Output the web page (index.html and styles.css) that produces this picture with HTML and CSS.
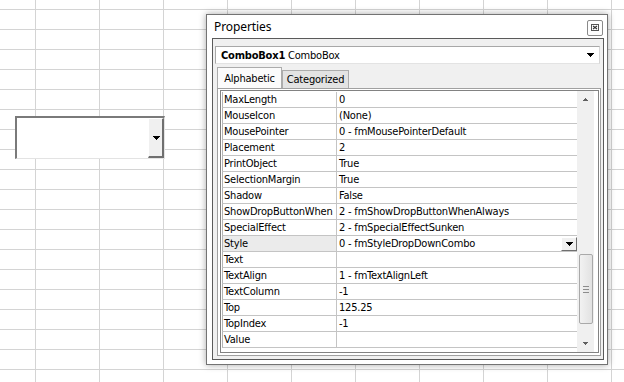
FILE: index.html
```html
<!DOCTYPE html>
<html>
<head>
<meta charset="utf-8">
<link rel="stylesheet" href="styles.css">
</head>
<body>
<div class="sheet">
  <div class="sheet-combo">
    <div class="sheet-combo-btn">
      <svg class="arrow" width="7" height="4" viewBox="0 0 7 4"><path d="M0 0h7v1H0zM1 1h5v1H1zM2 2h3v1H2zM3 3h1v1H3z" fill="#000"/></svg>
    </div>
  </div>

  <div class="dialog">
    <div class="titlebar">
      <span class="title">Properties</span>
      <span class="close">
        <svg width="14" height="14" viewBox="0 0 14 14"><rect x="3.5" y="3.5" width="7" height="6" fill="none" stroke="#555" stroke-width="1"/><path d="M5 5l4 3M9 5l-4 3" stroke="#333" stroke-width="1.1" fill="none"/></svg>
      </span>
    </div>
    <div class="frame">
      <div class="objcombo">
        <span class="objname"><b>ComboBox1</b> ComboBox</span>
        <svg class="arrow" width="7" height="4" viewBox="0 0 7 4"><path d="M0 0h7v1H0zM1 1h5v1H1zM2 2h3v1H2zM3 3h1v1H3z" fill="#000"/></svg>
      </div>
      <div class="tabs">
        <div class="tab active">Alphabetic</div>
        <div class="tab">Categorized</div>
      </div>
      <div class="gridframe">
        <div class="gridinner">
          <div class="rows">
            <div class="row"><div class="name">MaxLength</div><div class="value">0</div></div>
            <div class="row"><div class="name">MouseIcon</div><div class="value">(None)</div></div>
            <div class="row"><div class="name">MousePointer</div><div class="value">0 - fmMousePointerDefault</div></div>
            <div class="row"><div class="name">Placement</div><div class="value">2</div></div>
            <div class="row"><div class="name">PrintObject</div><div class="value">True</div></div>
            <div class="row"><div class="name">SelectionMargin</div><div class="value">True</div></div>
            <div class="row"><div class="name">Shadow</div><div class="value">False</div></div>
            <div class="row"><div class="name">ShowDropButtonWhen</div><div class="value">2 - fmShowDropButtonWhenAlways</div></div>
            <div class="row"><div class="name">SpecialEffect</div><div class="value">2 - fmSpecialEffectSunken</div></div>
            <div class="row selected"><div class="name">Style</div><div class="value"><span>0 - fmStyleDropDownCombo</span><span class="dropbtn"><svg class="arrow" width="7" height="4" viewBox="0 0 7 4"><path d="M0 0h7v1H0zM1 1h5v1H1zM2 2h3v1H2zM3 3h1v1H3z" fill="#000"/></svg></span></div></div>
            <div class="row"><div class="name">Text</div><div class="value"></div></div>
            <div class="row"><div class="name">TextAlign</div><div class="value">1 - fmTextAlignLeft</div></div>
            <div class="row"><div class="name">TextColumn</div><div class="value">-1</div></div>
            <div class="row"><div class="name">Top</div><div class="value">125.25</div></div>
            <div class="row"><div class="name">TopIndex</div><div class="value">-1</div></div>
            <div class="row"><div class="name">Value</div><div class="value"></div></div>
          </div>
          <div class="vscroll">
            <div class="sbtn"><svg width="5" height="3" viewBox="0 0 5 3"><path d="M2 0h1v1H2zM1 1h3v1H1zM0 2h5v1H0z" fill="#606060"/></svg></div>
            <div class="track">
              <div class="thumb">
                <span class="grip"></span><span class="grip"></span><span class="grip"></span>
              </div>
            </div>
            <div class="sbtn"><svg width="5" height="3" viewBox="0 0 5 3"><path d="M0 0h5v1H0zM1 1h3v1H1zM2 2h1v1H2z" fill="#606060"/></svg></div>
          </div>
        </div>
      </div>
    </div>
  </div>
</div>
</body>
</html>
```

FILE: styles.css
```css
html, body {
  margin: 0;
  padding: 0;
  background: #fff;
}

.sheet {
  position: relative;
  width: 624px;
  height: 382px;
  overflow: hidden;
  background-color: #fff;
  background-image:
    linear-gradient(to right, #d4d4d4 1px, transparent 1px),
    linear-gradient(to bottom, #d4d4d4 1px, transparent 1px);
  background-size: 64px 100%, 100% 20px;
  background-position: 35px 0, 0 9px;
}

.arrow {
  display: block;
}

/* Combo box sitting on the worksheet */
.sheet-combo {
  position: absolute;
  left: 15px;
  top: 116px;
  width: 150px;
  height: 43px;
  box-sizing: border-box;
  background: #fff;
  border-style: solid;
  border-width: 2px 1px 1px 2px;
  border-color: #7a7a7a #e3e3e3 #e3e3e3 #7a7a7a;
  display: flex;
  justify-content: flex-end;
}

.sheet-combo-btn {
  width: 16px;
  height: 100%;
  box-sizing: border-box;
  background: #f0f0f0;
  border-style: solid;
  border-width: 1px 2px 2px 1px;
  border-color: #fff #6f6f6f #6f6f6f #fff;
  display: flex;
  align-items: center;
  justify-content: center;
  padding-left: 1px;
}

/* Properties window */
.dialog {
  position: absolute;
  left: 206px;
  top: 14px;
  width: 402px;
  height: 351px;
  box-sizing: border-box;
  border: 1px solid #737373;
  background: #fff;
  box-shadow: 0 0 7px rgba(0, 0, 0, 0.35);
  padding: 0 3px 4px 5px;
  display: flex;
  flex-direction: column;
  font-family: "DejaVu Sans Condensed", "DejaVu Sans", sans-serif;
  font-size: 11px;
  letter-spacing: -0.2px;
  color: #000;
}

.titlebar {
  height: 23px;
  flex: none;
  display: flex;
  justify-content: space-between;
  align-items: center;
  padding-left: 2px;
}

.title {
  font-family: "Noto Sans", "Open Sans", sans-serif;
  font-size: 12px;
  letter-spacing: -0.1px;
  color: #000;
}

.close {
  width: 16px;
  height: 16px;
  box-sizing: border-box;
  margin-right: 1px;
  margin-top: 3px;
  border: 1px solid #8a8a8a;
  border-radius: 2px;
  background: #fdfdfd;
  display: flex;
  align-items: center;
  justify-content: center;
}

.frame {
  height: 322px;
  flex: none;
  box-sizing: border-box;
  border: 1px solid #5a5a5a;
  background: #f0f0f0;
}

.objcombo {
  margin: 7px 3px 0 2px;
  height: 18px;
  box-sizing: border-box;
  background: #fff;
  border: 1px solid;
  border-color: #a8a8a8 #d6d6d6 #e3e3e3 #a8a8a8;
  display: flex;
  align-items: center;
  justify-content: space-between;
  padding: 0 5px 0 5px;
}

.objname {
  white-space: nowrap;
}

.tabs {
  height: 24px;
  display: flex;
  align-items: flex-end;
  padding-left: 4px;
}

.tab {
  box-sizing: border-box;
  width: 67px;
  height: 18px;
  border: 1px solid #acacac;
  border-bottom: none;
  background: #e3e3e3;
  display: flex;
  align-items: center;
  justify-content: center;
}

.tab.active {
  width: 65px;
  height: 21px;
  background: #fbfbfb;
}

.gridframe {
  margin-left: 4px;
  width: 384px;
  height: 268px;
  box-sizing: border-box;
  border: 1px solid #a0a0a0;
  padding: 1px 1px 2px 2px;
  background: #fff;
}

.gridinner {
  height: 100%;
  box-sizing: border-box;
  border: 1px solid #828282;
  background: #fff;
  display: flex;
  padding-right: 4px;
}

.rows {
  flex: 1;
  padding: 1px 0 0 1px;
}

.row {
  display: flex;
  height: 16px;
  box-sizing: border-box;
  border-bottom: 1px solid #c4c4c4;
  border-left: 1px solid #b4b4b4;
  line-height: 15px;
  white-space: nowrap;
}

.name {
  width: 114px;
  flex: none;
  box-sizing: border-box;
  border-right: 1px solid #c4c4c4;
  padding-left: 1px;
  overflow: hidden;
}

.row.selected .name {
  background: #ebebeb;
}

.value {
  flex: 1;
  padding-left: 2px;
  display: flex;
  justify-content: space-between;
  overflow: hidden;
}

.dropbtn {
  width: 16px;
  height: 14px;
  margin-top: 1px;
  box-sizing: border-box;
  border: 1px solid;
  border-color: #fff #6f6f6f #6f6f6f #fff;
  background: #f0f0f0;
  display: flex;
  align-items: center;
  justify-content: center;
}

.vscroll {
  width: 17px;
  flex: none;
  background: #f0f0f0;
  display: flex;
  flex-direction: column;
}

.sbtn {
  height: 17px;
  flex: none;
  display: flex;
  align-items: center;
  justify-content: center;
}

.track {
  flex: 1;
}

.thumb {
  margin: 146px 1px 0 2px;
  height: 70px;
  box-sizing: border-box;
  border: 1px solid #a9a9a9;
  border-radius: 2px;
  background: linear-gradient(to right, #f2f2f2, #e2e2e2);
  display: flex;
  flex-direction: column;
  align-items: center;
  justify-content: center;
  gap: 2px;
}

.grip {
  display: block;
  width: 6px;
  height: 1px;
  background: #8c8c8c;
}
```
